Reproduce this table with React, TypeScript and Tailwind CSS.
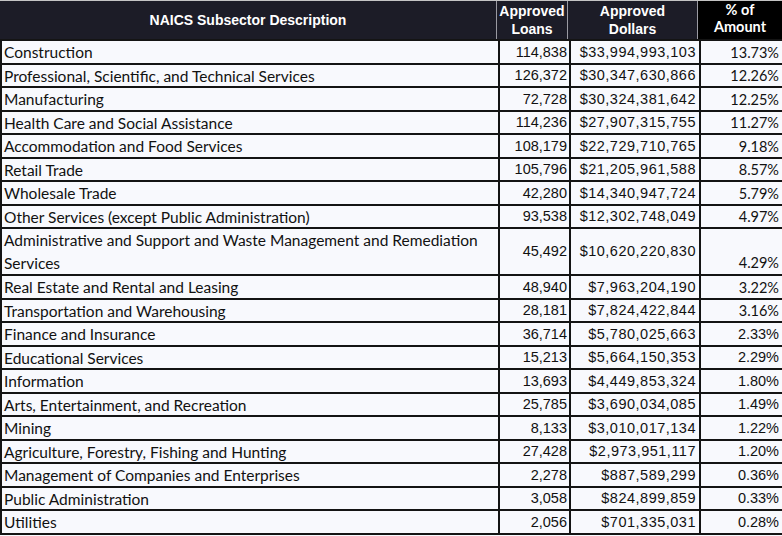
import React from "react";

type Row = { d: string; l: string; a: string; p: string; pc?: boolean; two?: boolean };

const rows: Row[] = [
  { d: "Construction", l: "114,838", a: "$33,994,993,103", p: "13.73%", pc: true },
  { d: "Professional, Scientific, and Technical Services", l: "126,372", a: "$30,347,630,866", p: "12.26%", pc: true },
  { d: "Manufacturing", l: "72,728", a: "$30,324,381,642", p: "12.25%", pc: true },
  { d: "Health Care and Social Assistance", l: "114,236", a: "$27,907,315,755", p: "11.27%", pc: true },
  { d: "Accommodation and Food Services", l: "108,179", a: "$22,729,710,765", p: "9.18%", pc: true },
  { d: "Retail Trade", l: "105,796", a: "$21,205,961,588", p: "8.57%", pc: true },
  { d: "Wholesale Trade", l: "42,280", a: "$14,340,947,724", p: "5.79%", pc: true },
  { d: "Other Services (except Public Administration)", l: "93,538", a: "$12,302,748,049", p: "4.97%", pc: true },
  { d: "Administrative and Support and Waste Management and Remediation Services", l: "45,492", a: "$10,620,220,830", p: "4.29%", pc: true, two: true },
  { d: "Real Estate and Rental and Leasing", l: "48,940", a: "$7,963,204,190", p: "3.22%", pc: true },
  { d: "Transportation and Warehousing", l: "28,181", a: "$7,824,422,844", p: "3.16%", pc: true },
  { d: "Finance and Insurance", l: "36,714", a: "$5,780,025,663", p: "2.33%" },
  { d: "Educational Services", l: "15,213", a: "$5,664,150,353", p: "2.29%" },
  { d: "Information", l: "13,693", a: "$4,449,853,324", p: "1.80%" },
  { d: "Arts, Entertainment, and Recreation", l: "25,785", a: "$3,690,034,085", p: "1.49%" },
  { d: "Mining", l: "8,133", a: "$3,010,017,134", p: "1.22%" },
  { d: "Agriculture, Forestry, Fishing and Hunting", l: "27,428", a: "$2,973,951,117", p: "1.20%" },
  { d: "Management of Companies and Enterprises", l: "2,278", a: "$887,589,299", p: "0.36%" },
  { d: "Public Administration", l: "3,058", a: "$824,899,859", p: "0.33%" },
  { d: "Utilities", l: "2,056", a: "$701,335,031", p: "0.28%" },
];

const cols = "grid grid-cols-[496px_71px_130px_85px]";

export default function App() {
  return (
    <div className="w-[782px] h-[536px] bg-[#f8f9fd] overflow-hidden text-[#111]">
      <div className={`${cols} h-[39px] border-t border-[#c4c4c4] bg-[#1c1c27] text-white font-['Liberation_Sans',Arial,sans-serif] font-bold text-[14px] leading-[18px]`}>
        <div className="flex items-center justify-center">NAICS Subsector Description</div>
        <div className="flex flex-col items-center justify-center border-l border-[#9a9aa2]">
          <span>Approved</span>
          <span>Loans</span>
        </div>
        <div className="flex flex-col items-center justify-center border-l border-[#9a9aa2]">
          <span>Approved</span>
          <span>Dollars</span>
        </div>
        <div className="flex flex-col items-center justify-start bg-black border-l border-[#9a9aa2] font-['Lato',sans-serif] text-[14.5px] leading-[17px]">
          <span>% of</span>
          <span>Amount</span>
        </div>
      </div>
      <div className="border-t-2 border-l-2 border-[#141414]">
        {rows.map((r) => (
          <div
            key={r.d}
            className={`${cols} ${r.two ? "h-[47px]" : "h-[23.5px]"} border-b-2 border-[#141414]`}
          >
            <div className={`px-[2px] font-['Lato',sans-serif] text-[15.5px] leading-[23px] ${r.two ? "" : "flex items-center whitespace-nowrap"}`}>
              {r.d}
            </div>
            <div className="flex items-center justify-end pr-[2px] border-l-2 border-[#141414] font-['Liberation_Sans',Arial,sans-serif] text-[14.5px]">
              {r.l}
            </div>
            <div className="flex items-center justify-end pr-[3px] border-l-2 border-[#141414] font-['Liberation_Sans',Arial,sans-serif] text-[14.5px] tracking-[0.5px]">
              {r.a}
            </div>
            <div
              className={`flex justify-end pr-[3px] border-l-2 border-r-2 border-[#141414] text-[14.5px] ${r.two ? "items-end pb-[1px]" : "items-center"} ${r.pc ? "font-['Lato',sans-serif]" : "font-['Liberation_Sans',Arial,sans-serif]"}`}
            >
              {r.p}
            </div>
          </div>
        ))}
      </div>
    </div>
  );
}
